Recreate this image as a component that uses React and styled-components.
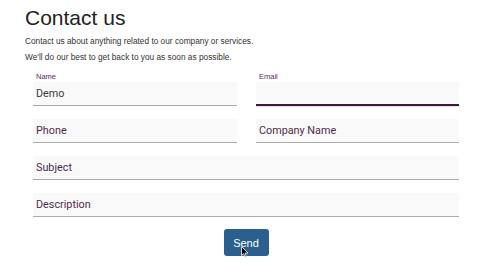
import React from "react";
import styled, { createGlobalStyle } from "styled-components";

const Global = createGlobalStyle`
  html, body { margin: 0; padding: 0; background: #ffffff; }
  body { font-family: "Liberation Sans", Arial, sans-serif; }
`;

const Page = styled.div`
  width: 480px;
  height: 270px;
  padding: 6px 0 0 25px;
  box-sizing: border-box;
  position: relative;
  overflow: hidden;
`;

const Title = styled.h1`
  margin: 0;
  font-family: "Liberation Sans", Arial, sans-serif;
  font-weight: 400;
  font-size: 21px;
  line-height: 24px;
  color: #222222;
`;

const Lead = styled.p`
  margin: ${(p) => p.$top}px 0 0 0;
  font-family: "Liberation Sans", Arial, sans-serif;
  font-size: 8.3px;
  line-height: 10px;
  color: #333333;
`;

const Form = styled.form`
  margin: 11px 0 0 8px;
  width: 426px;
  display: grid;
  grid-template-columns: 204px 203px;
  column-gap: 19px;
  row-gap: 13px;
`;

const Field = styled.label`
  display: flex;
  flex-direction: column;
  grid-column: ${(p) => (p.$wide ? "1 / span 2" : "auto")};
`;

const FieldLabel = styled.span`
  font-family: "Liberation Sans", Arial, sans-serif;
  font-size: 7.5px;
  line-height: 8px;
  color: #5c2d5c;
  padding-left: 3px;
  height: 9px;
`;

const Input = styled.div`
  height: 24px;
  box-sizing: border-box;
  background: #faf9fa;
  border-bottom: ${(p) => (p.$focused ? "2px solid #3b1a3b" : "1px solid #ababab")};
  box-shadow: ${(p) => (p.$focused ? "0 1px 0 #efd8ef" : "none")};
  display: flex;
  align-items: center;
  padding: 0 3px;
  font-family: Roboto, "Liberation Sans", sans-serif;
  font-size: 10.8px;
  color: ${(p) => (p.$value ? "#3a3a3a" : "#4d2a4d")};
`;

const Actions = styled.div`
  grid-column: 1 / span 2;
  display: flex;
  justify-content: center;
  margin-top: -1px;
`;

const Button = styled.button`
  width: 45px;
  height: 27px;
  border: none;
  border-radius: 3px;
  background: #2b5f8d;
  color: #ffffff;
  font-family: "Liberation Sans", Arial, sans-serif;
  font-size: 11px;
  padding: 0;
  position: relative;
  cursor: pointer;
`;

const Cursor = styled.svg`
  position: absolute;
  left: 17px;
  top: 17px;
  width: 8px;
  height: 12px;
`;

export default function App() {
  return (
    <>
      <Global />
      <Page>
        <Title>Contact us</Title>
        <Lead $top={6}>Contact us about anything related to our company or services.</Lead>
        <Lead $top={6}>We'll do our best to get back to you as soon as possible.</Lead>
        <Form onSubmit={(e) => e.preventDefault()}>
          <Field>
            <FieldLabel>Name</FieldLabel>
            <Input $value>Demo</Input>
          </Field>
          <Field>
            <FieldLabel>Email</FieldLabel>
            <Input $focused></Input>
          </Field>
          <Field>
            <Input>Phone</Input>
          </Field>
          <Field>
            <Input>Company Name</Input>
          </Field>
          <Field $wide>
            <Input>Subject</Input>
          </Field>
          <Field $wide>
            <Input>Description</Input>
          </Field>
          <Actions>
            <Button type="submit">
              Send
              <Cursor viewBox="0 0 8 12">
                <path d="M0.5 0.5 L0.5 9.5 L2.6 7.6 L4 11 L5.4 10.4 L4 7.1 L7 7.1 Z" fill="#000" stroke="#fff" strokeWidth="0.8" />
              </Cursor>
            </Button>
          </Actions>
        </Form>
      </Page>
    </>
  );
}
